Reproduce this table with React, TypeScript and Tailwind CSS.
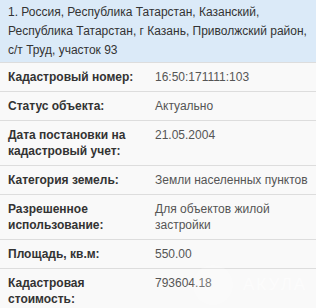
const rows: [string, string][] = [
  ["Кадастровый номер:", "16:50:171111:103"],
  ["Статус объекта:", "Актуально"],
  ["Дата постановки на кадастровый учет:", "21.05.2004"],
  ["Категория земель:", "Земли населенных пунктов"],
  ["Разрешенное использование:", "Для объектов жилой застройки"],
  ["Площадь, кв.м:", "550.00"],
  ["Кадастровая стоимость:", "793604.18"],
];

export default function App() {
  return (
    <div
      className="relative w-[316px] h-[308px] overflow-hidden bg-[#f9f9f9] text-[#333]"
      style={{ fontFamily: '"Liberation Sans", Arial, sans-serif' }}
    >
      <div className="bg-[#dbeaf8] pl-2 pr-1 pt-[3px] pb-[2px] text-[12px] leading-[19px] border-b border-[#dddddd] whitespace-nowrap">
        1. Россия, Республика Татарстан, Казанский,
        <br />
        Республика Татарстан, г Казань, Приволжский район,
        <br />
        с/т Труд, участок 93
      </div>
      {rows.map(([label, value]) => (
        <div
          key={label}
          className="grid grid-cols-[155px_1fr] border-b border-[#dddddd] py-[6px] text-[12px] leading-[16px]"
        >
          <div className="pl-2 pr-3 font-bold text-[#333]">{label}</div>
          <div className="text-[#555]">{value}</div>
        </div>
      ))}
      <div className="pointer-events-none absolute left-[193px] top-[265px] flex items-center gap-[10px] opacity-50">
        <div className="h-[40px] w-[40px] rounded-full bg-white/40" />
        <span className="text-[17px] tracking-[2px] text-white">АКУЛА</span>
      </div>
    </div>
  );
}
